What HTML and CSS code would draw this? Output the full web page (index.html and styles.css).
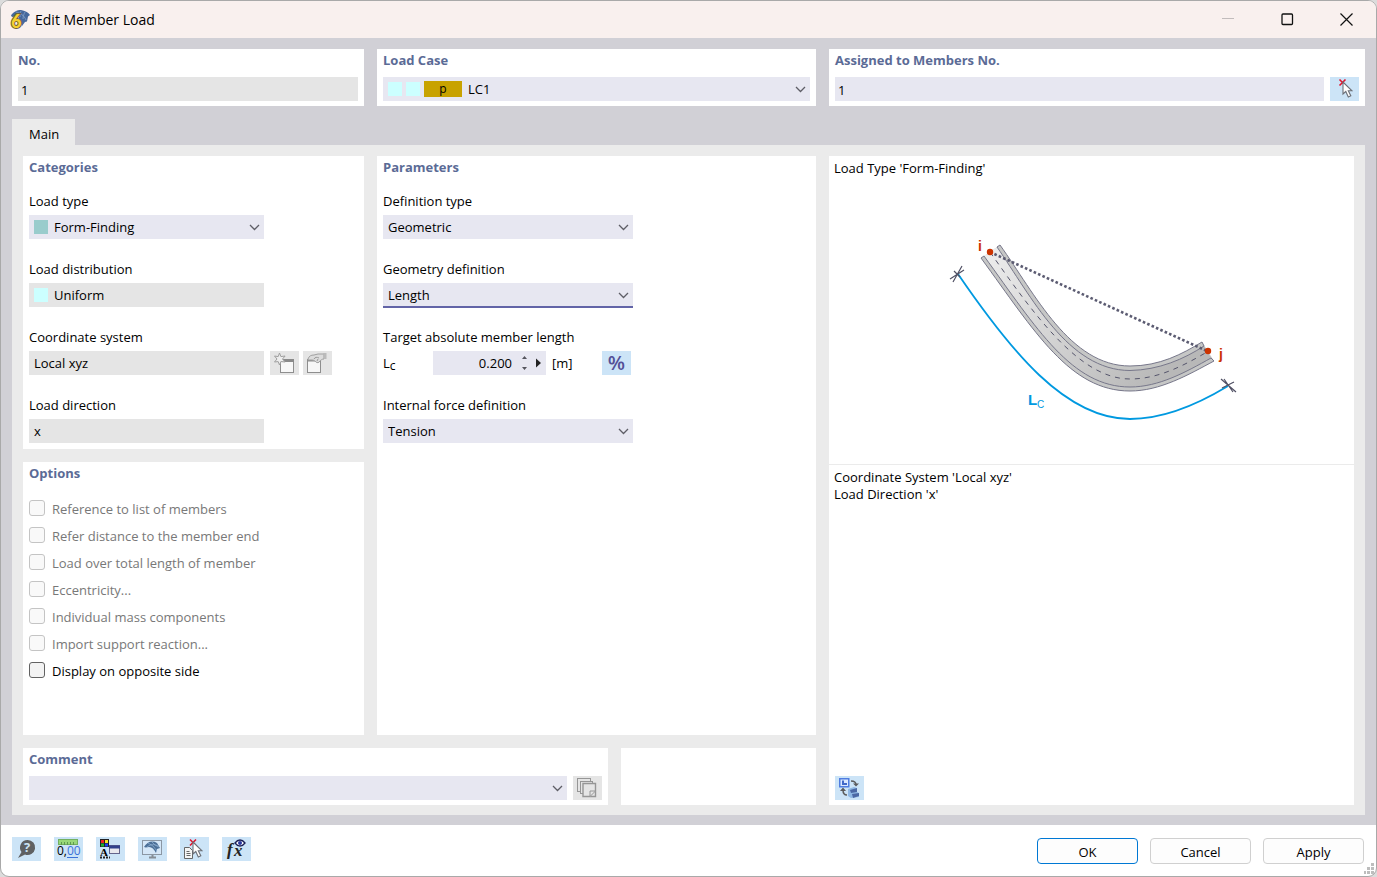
FILE: index.html
```html
<!DOCTYPE html>
<html lang="en">
<head>
  <meta charset="UTF-8">
  <meta name="viewport" content="width=device-width, initial-scale=1.0">
  <title>Edit Member Load</title>
  <link rel="stylesheet" href="styles.css">
</head>
<body>
  <!-- shared icon shapes -->
  <svg class="defs" aria-hidden="true">
    <symbol id="chevron" viewBox="0 0 11 7"><path d="M1 1l4.500 4.500L10 1" fill="none" stroke="#5e5e66" stroke-width="1.300"/></symbol>
    <symbol id="cursor" viewBox="0 0 11 17"><path d="M1 1v12l2.800-2.500 2.500 5.500 2.500-1.200-2.500-5H10z" fill="#fff" stroke="#6c7078" stroke-width="1.100"/></symbol>
  </svg>

  <div class="window">
    <header class="titlebar">
      <svg class="app-icon" width="20" height="20" viewBox="0 0 20 20">
        <path d="M1 5.500C3 2 7 0 11 0c4 1 7 2 9 5l-2 1.500-1 5-2 .5-3 4L8 6 2 7z" fill="#46689c"/>
        <path d="M6 2c4 1 8 3 10 8M11 1c-1 2-1 4-1 6M15 2c-1 2-2 4-2 7" fill="none" stroke="#86a3c8" stroke-width=".8"/>
        <text class="glyph-six" x="1" y="18">6</text>
      </svg>
      <h1>Edit Member Load</h1>
      <div class="window-buttons">
        <button type="button" aria-label="Minimize" disabled><svg width="13" height="13"><path d="M0 5.500h12" stroke="#c2bcbc"/></svg></button>
        <button type="button" aria-label="Maximize"><svg width="13" height="13"><rect x="1" y="1" width="10.500" height="10.500" rx="1" fill="none" stroke="#111" stroke-width="1.300"/></svg></button>
        <button type="button" aria-label="Close"><svg width="13" height="13"><path d="M.5.5l12 12M12.500.5l-12 12" stroke="#111" stroke-width="1.200"/></svg></button>
      </div>
    </header>

    <main class="content">
      <div class="top-row">
        <section class="panel">
          <h2><label for="no">No.</label></h2>
          <input class="field" id="no" type="text" value="1" readonly>
        </section>
        <section class="panel">
          <h2><label for="load-case">Load Case</label></h2>
          <div class="select">
            <select class="field with-case" id="load-case"><option>LC1</option></select>
            <span class="case-tags"><i class="swatch cyan"></i><i class="swatch cyan"></i><b>p</b></span>
            <svg class="chevron"><use href="#chevron"/></svg>
          </div>
        </section>
        <section class="panel">
          <h2><label for="members">Assigned to Members No.</label></h2>
          <div class="row">
            <input class="field editable" id="members" type="text" value="1">
            <button type="button" class="tool" aria-label="Select members">
              <svg viewBox="0 0 29 24"><path d="M9.500 2.500l6 6M15.500 2.500l-6 6" stroke="#e0142c" stroke-width="1.600"/><use href="#cursor" x="12" y="4" width="11" height="17"/></svg>
            </button>
          </div>
        </section>
      </div>

      <div class="tabs"><button type="button" class="tab">Main</button></div>

      <div class="page">
        <section class="panel categories">
          <h2>Categories</h2>
          <div class="group">
            <label for="load-type">Load type</label>
            <div class="select">
              <select class="field with-swatch" id="load-type"><option>Form-Finding</option></select>
              <i class="swatch teal"></i>
              <svg class="chevron"><use href="#chevron"/></svg>
            </div>
          </div>
          <div class="group">
            <label for="distribution">Load distribution</label>
            <div class="select">
              <input class="field with-swatch" id="distribution" type="text" value="Uniform" readonly>
              <i class="swatch cyan"></i>
            </div>
          </div>
          <div class="group">
            <label for="system">Coordinate system</label>
            <div class="row">
              <input class="field" id="system" type="text" value="Local xyz" readonly>
              <button type="button" class="tool gray" aria-label="New coordinate system" disabled>
                <svg viewBox="0 0 29 24"><rect x="10.500" y="8.500" width="13" height="13" fill="#f7f7f7" stroke="#8e8e8e"/><path d="M10 9.500h14" stroke="#8a8a8a" stroke-width="3"/><path d="M9.500 2l1.400 3.600 4.200-.6-2.600 3 2.600 3-4.200-.4L9.500 14l-1.300-3.400-3.700.4 2.500-3-2.500-3 3.700.6z" fill="#eee" stroke="#a0a0a0"/></svg>
              </button>
              <button type="button" class="tool gray" aria-label="Edit coordinate system" disabled>
                <svg viewBox="0 0 29 24"><rect x="4.500" y="8.500" width="13" height="13" fill="#f7f7f7" stroke="#8e8e8e"/><path d="M4 9.500h14" stroke="#8e8e8e" stroke-width="2"/><path d="M5 8c1-3 3-4 6-4l4-1h6v5c-2 0-3 1-4 2-1 2-3 2-4 1s-2-2-4-2H5z" fill="#dcdcdc" stroke="#a0a0a0"/><path d="M11 8c1-2 3-2 5-1M14 10l1-2" fill="none" stroke="#999"/><path d="M20 2h3.500v6H21z" fill="#bbb"/></svg>
              </button>
            </div>
          </div>
          <div class="group">
            <label for="direction">Load direction</label>
            <input class="field" id="direction" type="text" value="x" readonly>
          </div>
        </section>

        <section class="panel options">
          <h2>Options</h2>
          <label class="check"><input type="checkbox" disabled>Reference to list of members</label>
          <label class="check"><input type="checkbox" disabled>Refer distance to the member end</label>
          <label class="check"><input type="checkbox" disabled>Load over total length of member</label>
          <label class="check"><input type="checkbox" disabled>Eccentricity...</label>
          <label class="check"><input type="checkbox" disabled>Individual mass components</label>
          <label class="check"><input type="checkbox" disabled>Import support reaction...</label>
          <label class="check"><input type="checkbox">Display on opposite side</label>
        </section>

        <section class="panel parameters">
          <h2>Parameters</h2>
          <div class="group">
            <label for="def-type">Definition type</label>
            <div class="select">
              <select class="field" id="def-type"><option>Geometric</option></select>
              <svg class="chevron"><use href="#chevron"/></svg>
            </div>
          </div>
          <div class="group">
            <label for="geometry">Geometry definition</label>
            <div class="select">
              <select class="field active" id="geometry"><option>Length</option></select>
              <svg class="chevron"><use href="#chevron"/></svg>
            </div>
          </div>
          <div class="group">
            <label for="length">Target absolute member length</label>
            <div class="row length-row">
              <span class="symbol">L<small>c</small></span>
              <div class="spinner">
                <input class="field editable" id="length" type="text" value="0.200">
                <button type="button" aria-label="Step value"><svg width="7" height="16"><path d="M1 4l2.500-3L6 4zM1 12l2.500 3L6 12z" fill="#55555d"/></svg></button>
                <button type="button" aria-label="More"><svg width="7" height="10"><path d="M1 0.500l5 4.500-5 4.500z" fill="#222"/></svg></button>
              </div>
              <span class="unit">[m]</span>
              <button type="button" class="tool percent" aria-label="Relative value">%</button>
            </div>
          </div>
          <div class="group">
            <label for="force">Internal force definition</label>
            <div class="select">
              <select class="field" id="force"><option>Tension</option></select>
              <svg class="chevron"><use href="#chevron"/></svg>
            </div>
          </div>
        </section>

        <div class="comment-row">
          <section class="panel">
            <h2><label for="comment">Comment</label></h2>
            <div class="row">
              <div class="select">
                <select class="field" id="comment"><option></option></select>
                <svg class="chevron"><use href="#chevron"/></svg>
              </div>
              <button type="button" class="tool gray" aria-label="Comment library" disabled>
                <svg viewBox="0 0 29 24"><g fill="#e5e5e5" stroke="#969696"><rect x="4.500" y="2.500" width="13" height="13"/><rect x="7.500" y="5.500" width="12" height="12"/><path d="M10 7.500h12.500v13H10z" stroke-width="1.400"/><path d="M17 20.500V15h5.500z"/></g></svg>
              </button>
            </div>
          </section>
          <section class="panel"></section>
        </div>

        <section class="view">
          <div class="view-top">
            <p>Load Type 'Form-Finding'</p>
            <svg class="diagram" width="324" height="220" viewBox="0 0 324 220">
              <defs>
                <linearGradient id="web" x1="0" y1="0" x2="1" y2="0.500">
                  <stop offset="0" stop-color="#eeeeee"/>
                  <stop offset="1" stop-color="#b8b8b8"/>
                </linearGradient>
              </defs>
              <!-- cable body, flanges and axis -->
              <path d="M70 25C105 74 140 146 200 146C230 146 252 134 272 122L284 141C258 155 230 171 200 171C140 171 105 112 51 38L60 32z" fill="#c6c7c6"/>
              <path d="M67 27C101 76 138 150.500 200 150.500C229 150 254 139 274 126L281 138C256 152 229 167 200 167C142 167 107 109 54 36z" fill="url(#web)"/>
              <g fill="none" stroke="#77778a" stroke-width="1">
                <path d="M67 27C101 76 138 150.500 200 150.500C229 150 254 139 274 126M54 36C107 109 142 167 200 167C229 167 256 152 281 138"/>
                <path d="M67 27L70 25C105 74 140 146 200 146C230 146 252 134 272 122L274 126M54 36L51 38C105 112 140 171 200 171C230 171 258 155 284 141L281 138"/>
                <path d="M60 32C105 96 150 159 200 159C228 159 253 146 277 132" stroke="#55556b" stroke-dasharray="5 5"/>
              </g>
              <path d="M60 32L277 131" stroke="#5c5c72" stroke-width="2.600" stroke-dasharray="2.600 2.200"/>
              <circle cx="60" cy="32" r="3.200" fill="#cc3300"/>
              <circle cx="278" cy="131" r="3.200" fill="#cc3300"/>
              <!-- length dimension -->
              <path d="M28 54C80 130 135 199 200 199C232 199 265 186 298 166" fill="none" stroke="#0099e0" stroke-width="1.800"/>
              <path d="M32 46L23 62M20 59L34 50M24 51L30 57M291 159L306 172M294 159L303 172M292 168L304 162" stroke="#505064" stroke-width="1.200"/>
              <text class="node" x="48" y="31">i</text>
              <text class="node" x="289" y="139">j</text>
              <text class="dim" x="98" y="185">L</text>
              <text class="dim sub" x="107" y="188">C</text>
            </svg>
          </div>
          <div class="view-bottom">
            <p>Coordinate System 'Local xyz'<br>Load Direction 'x'</p>
            <button type="button" class="tool" aria-label="Switch view">
              <svg viewBox="0 0 29 24"><rect x="4.750" y="2.750" width="9" height="8" fill="#dbe8ff" stroke="#4f7de0" stroke-width="1.500"/><path d="M7 4.500h2v2.500h3v2H7z" fill="#4169c8"/><path d="M16 5c4 0 5 2 5 4" fill="none" stroke="#5c5c5c" stroke-width="1.500"/><path d="M18 7.500h6l-3 3zM5 15l3-3.500L11 15z" fill="#5c5c5c"/><path d="M8 14c0 3 1 5 4 5" fill="none" stroke="#5c5c5c" stroke-width="1.500"/><path d="M13 13l6-2 3 1v4l2 1v4l-8 1-3-2z" fill="#8fb8e4"/><path d="M15 14l7-2v4l-6 1zM17 18l7-1v3l-6 2z" fill="#4c68a4"/></svg>
            </button>
          </div>
        </section>
      </div>
    </main>

    <footer class="footer">
      <div class="toolbar">
        <button type="button" class="tool" aria-label="Help">
          <svg viewBox="0 0 29 24"><path d="M15.500 3a7.500 7.500 0 1 1-2.500 14.500L6 21l3.500-6A7.500 7.500 0 0 1 15.500 3z" fill="#5f6163"/><text class="glyph-help" x="15" y="15">?</text></svg>
        </button>
        <button type="button" class="tool" aria-label="Units">
          <svg viewBox="0 0 29 24"><rect x="4.500" y="2.500" width="19" height="5" fill="#98d878" stroke="#72b060"/><path d="M7.500 5v3M10.500 5v3M13.500 5v3M16.500 5v3M19.500 5v3" stroke="#5f9a50"/><text class="glyph-num" x="3" y="18">0,<tspan fill="#3c72d8">00</tspan></text><path d="M13 20.500h11" stroke="#3c72d8"/></svg>
        </button>
        <button type="button" class="tool" aria-label="Display properties">
          <svg viewBox="0 0 29 24"><path d="M4 2h9v8H4z" fill="#222"/><path d="M5 3h3v3H5z" fill="#f02020"/><path d="M9 3h3v3H9z" fill="#f4e620"/><path d="M5 6.500h3v3H5z" fill="#20b030"/><path d="M9 6.500h3v3H9z" fill="#2040f0"/><text class="glyph-a" x="4" y="19">A</text><path d="M4 20.500h10" stroke="#222" stroke-width="2" stroke-dasharray="2 1"/><rect x="13.500" y="8.500" width="10" height="8" fill="#e8e8ee" stroke="#64648c"/><path d="M13 10h11" stroke="#30408c" stroke-width="3"/></svg>
        </button>
        <button type="button" class="tool" aria-label="View settings">
          <svg viewBox="0 0 29 24"><rect x="4.500" y="3.500" width="19" height="14" fill="#d5e7f8" stroke="#8b97a4"/><path d="M11 20.500h7M14.500 18v2" stroke="#858d96" stroke-width="2"/><path d="M6 10c3-5 8-7 13-4l3 5-3 1-1 4c-2-4-4-6-7-6-2 0-3 1-5 0z" fill="#4c7098"/><path d="M10 6l5 3 4 5M14 5l3 3 4 2M9 10c4-3 7-3 11-1" fill="none" stroke="#92b3d5" stroke-width=".7"/></svg>
        </button>
        <button type="button" class="tool" aria-label="Select objects">
          <svg viewBox="0 0 29 24"><path d="M4.500 10.500h5l3 3v8h-8z" fill="#f5f5f5" stroke="#666"/><path d="M6.500 14.500h3M6.500 16.500h4M6.500 18.500h4" stroke="#666"/><path d="M10 2.500l6 6M16 2.500l-6 6" stroke="#e0142c" stroke-width="1.600"/><use href="#cursor" x="12" y="4" width="11" height="17"/></svg>
        </button>
        <button type="button" class="tool" aria-label="Formulas">
          <svg viewBox="0 0 29 24"><text class="glyph-fx" x="5" y="18">f<tspan x="12" y="19">x</tspan></text><path d="M13 6c3-4 7-4 10 0-3 4-7 4-10 0z" fill="#fff" stroke="#1c2058" stroke-width="1.300"/><circle cx="18" cy="6" r="2" fill="#2a38a0"/></svg>
        </button>
      </div>
      <div class="actions">
        <button type="button" class="action primary">OK</button>
        <button type="button" class="action">Cancel</button>
        <button type="button" class="action">Apply</button>
      </div>
      <svg class="grip" width="10" height="11"><path d="M7 0h3v3H7zM7 4h3v3H7zM7 8h3v3H7zM3 4h3v3H3zM3 8h3v3H3zM0 8h2v3H0z" fill="#bdbdbd"/></svg>
    </footer>
  </div>
</body>
</html>
```
FILE: styles.css
```css
* {
  box-sizing: border-box;
}
body {
  margin: 0;
  background: #dcdcdc;
  color: #000;
  font: 13px/20px "Open Sans", "Noto Sans", sans-serif;
}
button, input, select {
  font: inherit;
  color: inherit;
}
button {
  padding: 0;
  border: none;
  background: none;
}
h1, h2, p {
  margin: 0;
}
.defs {
  position: absolute;
  width: 0;
  height: 0;
}
.window {
  position: relative;
  display: flex;
  flex-direction: column;
  min-height: 100vh;
  border: 1px solid #a9a9a9;
  border-radius: 9px;
  background: #fff;
  overflow: hidden;
}

/* title bar */
.titlebar {
  display: flex;
  align-items: center;
  height: 37px;
  padding: 0 9px;
  background: #f9f0ee;
}
.titlebar h1 {
  flex: 1;
  margin-left: 5px;
  font-size: 14px;
  font-weight: 400;
}
.window-buttons {
  display: flex;
}
.window-buttons button {
  display: flex;
  justify-content: center;
  width: 59px;
}
.window-buttons button:last-child {
  margin-right: -9px;
}
.app-icon {
  overflow: visible;
}
.glyph-six {
  font: 900 18px Lato, sans-serif;
  fill: #f6cf2e;
  stroke: #6f6238;
  stroke-width: 2px;
  paint-order: stroke;
}

/* panels */
.content {
  flex: 1;
  display: flex;
  flex-direction: column;
  padding: 11px 11px 10px;
  background: #d1d0d6;
}
.top-row {
  display: grid;
  grid-template-columns: 352fr 439fr 536fr;
  gap: 13px;
}
.panel {
  min-width: 0;
  padding: 0 6px 5px;
  background: #fff;
}
.panel h2 {
  margin-bottom: 6px;
  font-size: 13px;
  line-height: 22px;
  font-weight: 700;
  color: #5b6b96;
}
.tabs {
  display: flex;
  margin-top: 13px;
}
.tab {
  height: 26px;
  padding: 4px 16px 0 17px;
  background: #ebebeb;
}
.page {
  flex: 1;
  display: grid;
  grid-template-columns: 341fr 439fr 525fr;
  grid-template-rows: auto 1fr auto;
  grid-template-areas:
    "categories parameters view"
    "options parameters view"
    "comment comment view";
  gap: 13px;
  padding: 11px 11px 10px;
  background: #ebebeb;
}
.categories {
  grid-area: categories;
  padding-bottom: 6px;
}
.options {
  grid-area: options;
}
.parameters {
  grid-area: parameters;
}
.categories h2, .parameters h2 {
  margin-bottom: 13px;
}
.options h2 {
  margin-bottom: 11px;
}
.comment-row {
  grid-area: comment;
  display: grid;
  grid-template-columns: 3fr 1fr;
  gap: 13px;
}

/* fields */
.field {
  display: block;
  width: 100%;
  height: 24px;
  padding: 0 5px;
  border: none;
  border-radius: 0;
  outline: none;
  background: #e5e5e5;
  appearance: none;
}
select.field, .field.editable {
  background: #e7e7f1;
}
.field.active {
  box-shadow: inset 0 -1px #6264a7, 0 1px #6264a7;
}
.top-row input.field {
  padding: 2px 3px 0;
}
.group + .group {
  margin-top: 20px;
}
.group > label {
  display: block;
  margin-bottom: 4px;
}
.categories .select, .categories .field {
  width: 235px;
}
.parameters .select {
  width: 250px;
}
.row {
  display: flex;
  gap: 6px;
}
.row > .select {
  flex: 1;
}
.categories .tool + .tool {
  margin-left: -2px;
}
.select {
  position: relative;
}
.chevron {
  position: absolute;
  right: 4px;
  top: 9px;
  width: 11px;
  height: 7px;
  pointer-events: none;
}
.swatch {
  width: 14px;
  height: 14px;
}
.cyan {
  background: #ccffff;
}
.teal {
  background: #99cccc;
}
.select > .swatch {
  position: absolute;
  left: 5px;
  top: 5px;
}
.with-swatch {
  padding-left: 25px;
}
.with-case {
  padding-left: 85px;
}
.case-tags {
  position: absolute;
  left: 5px;
  top: 4px;
  display: flex;
  align-items: center;
  gap: 4px;
  pointer-events: none;
}
.case-tags b {
  width: 38px;
  height: 16px;
  background: #c8a200;
  font-size: 12px;
  font-weight: 400;
  line-height: 16px;
  text-align: center;
}
.tool {
  flex: none;
  width: 29px;
  height: 24px;
  background: #cce4f7;
}
.tool.gray {
  background: #e5e5e5;
}
.tool svg {
  display: block;
  width: 29px;
  height: 24px;
}
.length-row {
  align-items: center;
}
.symbol {
  width: 44px;
}
.symbol small {
  font-size: 12px;
  vertical-align: -2px;
  line-height: 1;
}
.spinner {
  display: flex;
  width: 113px;
  padding-right: 4px;
  background: #e7e7f1;
}
.spinner .field {
  flex: 1;
  min-width: 0;
  text-align: right;
}
.spinner button {
  display: flex;
  align-items: center;
  margin-left: 4px;
}
.spinner button + button {
  margin-left: 7px;
}
.unit {
  width: 44px;
}
.percent {
  color: #544f96;
  font-size: 20px;
  font-weight: 600;
  line-height: 24px;
}

/* check boxes */
.check {
  display: flex;
  align-items: center;
  gap: 7px;
  height: 27px;
}
.check input {
  width: 16px;
  height: 16px;
  margin: 0 0 2px;
  border: 1px solid #626262;
  border-radius: 3px;
  background: #f3f3f3;
  appearance: none;
}
.check input:disabled {
  border-color: #c4c4c4;
  background: #f9f9f9;
}
.check:has(input:disabled) {
  color: #787878;
}

/* picture column */
.view {
  grid-area: view;
  display: flex;
  flex-direction: column;
  background: #fff;
  line-height: 17px;
}
.view-top {
  flex: 308;
  padding: 4px 5px;
  border-bottom: 1px solid #ebebeb;
}
.view-bottom {
  flex: 340;
  display: flex;
  flex-direction: column;
  justify-content: space-between;
  padding: 4px 5px 5px;
}
.view-bottom .tool {
  margin-left: 1px;
}
.diagram {
  display: block;
  margin: 43px auto 0;
}
.node, .dim {
  font: bold 14px "Liberation Sans", Arial, sans-serif;
  fill: #cc3300;
}
.dim {
  font-size: 15px;
  fill: #0099e0;
}
.dim.sub {
  font-size: 10px;
  font-weight: 400;
}

/* footer */
.footer {
  display: flex;
  justify-content: space-between;
  padding: 12px 12px 12px 11px;
}
.toolbar {
  display: flex;
  gap: 13px;
}
.actions {
  display: flex;
  gap: 12px;
  padding-top: 1px;
}
.action {
  width: 101px;
  height: 26px;
  border: 1px solid #d0d0d0;
  border-radius: 4px;
  background: #fdfdfd;
  line-height: 26px;
}
.action.primary {
  border-color: #0078d4;
}
.grip {
  position: absolute;
  right: 2px;
  bottom: 2px;
}
.glyph-help {
  font: bold 13px "Open Sans", sans-serif;
  fill: #cce4f7;
  text-anchor: middle;
}
.glyph-num {
  font: 12px "Open Sans", sans-serif;
}
.glyph-a {
  font: bold 11px "Liberation Serif", serif;
}
.glyph-fx {
  font: italic bold 17px "Liberation Serif", serif;
  fill: #222;
}
```
